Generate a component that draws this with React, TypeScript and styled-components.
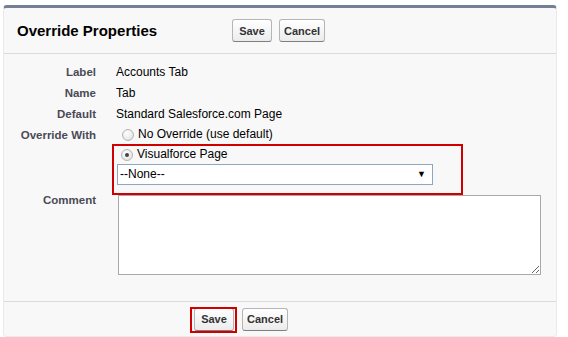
import styled, { createGlobalStyle } from "styled-components";

const GlobalStyle = createGlobalStyle`
  body {
    margin: 0;
    background: #ffffff;
    font-family: "Liberation Sans", Arial, sans-serif;
  }
`;

const Panel = styled.div`
  box-sizing: border-box;
  width: 554px;
  margin: 5px 0 0 3px;
  background: #f8f8f8;
  border: 1px solid #eaeaea;
  border-top: 3px solid #747e96;
  border-radius: 4px;
`;

const Header = styled.div`
  display: grid;
  grid-template-columns: 228px 1fr;
  align-items: center;
  height: 45px;
  border-bottom: 1px solid #dbdbdb;
`;

const Title = styled.h2`
  margin: 0;
  padding-left: 13px;
  font-size: 15px;
  font-weight: bold;
  color: #000000;
`;

const ButtonBar = styled.div`
  display: flex;
  align-items: center;
  gap: 7px;
`;

const Button = styled.button`
  box-sizing: border-box;
  min-width: 40px;
  height: 23px;
  padding: 0 4px;
  font-family: "Liberation Sans", Arial, sans-serif;
  font-size: 11px;
  font-weight: bold;
  color: #333333;
  background: linear-gradient(#ffffff, #ececec);
  border: 1px solid #b5b5b5;
  border-bottom-color: #7f7f7f;
  border-radius: 3px;
`;

const Highlight = styled.span`
  position: relative;
  display: inline-flex;

  &::after {
    content: "";
    position: absolute;
    top: -1px;
    bottom: -2px;
    left: -4px;
    right: -3px;
    border: 2px solid #d00000;
    pointer-events: none;
  }
`;

const Body = styled.div`
  padding: 8px 0 26px;
  border-bottom: 1px solid #dbdbdb;
`;

const Row = styled.div`
  display: flex;
  align-items: flex-start;
`;

const LabelCell = styled.div<{ $line?: number }>`
  flex: 0 0 92px;
  text-align: right;
  font-size: 11.5px;
  font-weight: bold;
  color: #4a4a56;
  line-height: ${(p) => p.$line ?? 21}px;
`;

const DataCell = styled.div`
  margin-left: 20px;
  font-size: 12px;
  color: #000000;
  line-height: 21px;
`;

const RadioRow = styled.label<{ $indent: number; $line: number }>`
  display: flex;
  align-items: center;
  gap: 4px;
  padding-left: ${(p) => p.$indent}px;
  line-height: ${(p) => p.$line}px;
  font-size: 12px;
  color: #000000;
`;

const RadioDot = styled.span<{ $checked?: boolean }>`
  box-sizing: border-box;
  display: inline-flex;
  align-items: center;
  justify-content: center;
  width: 12px;
  height: 12px;
  border-radius: 50%;
  border: 1px solid #b4b4b4;
  background: radial-gradient(circle at 40% 35%, #ffffff, #dcdcdc);

  &::after {
    content: "";
    display: ${(p) => (p.$checked ? "block" : "none")};
    width: 4px;
    height: 4px;
    border-radius: 50%;
    background: #444444;
  }
`;

const MarkBox = styled.div`
  box-sizing: border-box;
  width: 351px;
  margin-left: -4px;
  padding: 0 0 8px 3px;
  border: 2px solid #d00000;
`;

const Select = styled.div`
  box-sizing: border-box;
  display: flex;
  align-items: center;
  justify-content: space-between;
  width: 316px;
  height: 21px;
  margin-top: 1px;
  padding: 0 6px 0 2px;
  background: #ffffff;
  border: 1px solid #8ea6c0;
  font-size: 12px;
  color: #000000;
`;

const Caret = styled.span`
  font-size: 9px;
  color: #000000;
`;

const Comment = styled.textarea`
  box-sizing: border-box;
  display: block;
  width: 423px;
  height: 80px;
  margin-left: 22px;
  border: 1px solid #a9a9a9;
  background: #ffffff;
  font-family: "Liberation Sans", Arial, sans-serif;
  font-size: 12px;
`;

const Footer = styled.div`
  display: flex;
  align-items: center;
  gap: 8px;
  height: 34px;
  padding-left: 190px;
`;

const details = [
  { label: "Label", value: "Accounts Tab" },
  { label: "Name", value: "Tab" },
  { label: "Default", value: "Standard Salesforce.com Page" },
];

export default function App() {
  return (
    <>
      <GlobalStyle />
      <Panel>
        <Header>
          <Title>Override Properties</Title>
          <ButtonBar>
            <Button>Save</Button>
            <Button>Cancel</Button>
          </ButtonBar>
        </Header>
        <Body>
          {details.map((d) => (
            <Row key={d.label}>
              <LabelCell>{d.label}</LabelCell>
              <DataCell>{d.value}</DataCell>
            </Row>
          ))}
          <Row>
            <LabelCell>Override With</LabelCell>
            <DataCell>
              <RadioRow $indent={6} $line={19}>
                <RadioDot />
                No Override (use default)
              </RadioRow>
              <MarkBox>
                <RadioRow $indent={4} $line={17}>
                  <RadioDot $checked />
                  Visualforce Page
                </RadioRow>
                <Select>
                  --None--
                  <Caret>▼</Caret>
                </Select>
              </MarkBox>
            </DataCell>
          </Row>
          <Row>
            <LabelCell $line={11}>Comment</LabelCell>
            <Comment />
          </Row>
        </Body>
        <Footer>
          <Highlight>
            <Button>Save</Button>
          </Highlight>
          <Button>Cancel</Button>
        </Footer>
      </Panel>
    </>
  );
}
